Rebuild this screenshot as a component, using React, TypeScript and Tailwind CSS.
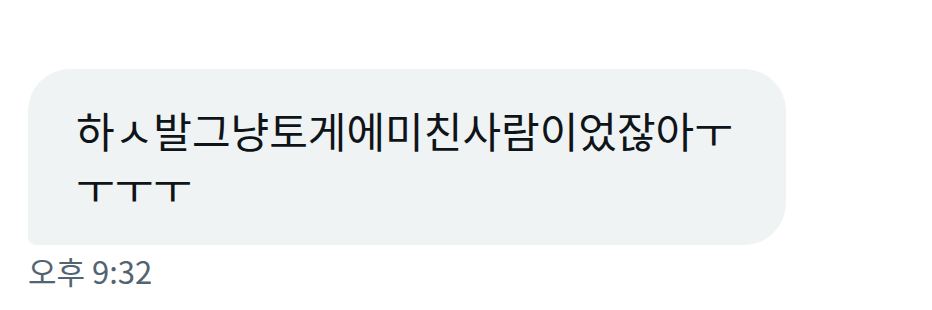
export default function App() {
  return (
    <div
      className="h-[310px] w-[932px] bg-white pt-[69px] pl-[28px]"
      style={{ fontFamily: '"Noto Sans CJK KR", "Noto Sans", sans-serif' }}
    >
      <div className="w-[758px] rounded-[42px] rounded-bl-[8px] bg-[#eff3f4] pt-[33px] pb-[31px] pl-[48px]">
        <p className="w-[665px] text-[42px] leading-[56px] text-[#0f1419] break-all">
          하ㅅ발그냥토게에미친사람이었잖아ㅜㅜㅜㅜ
        </p>
      </div>
      <p className="mt-[6px] text-[31px] leading-[40px] text-[#536471]">오후 9:32</p>
    </div>
  );
}
